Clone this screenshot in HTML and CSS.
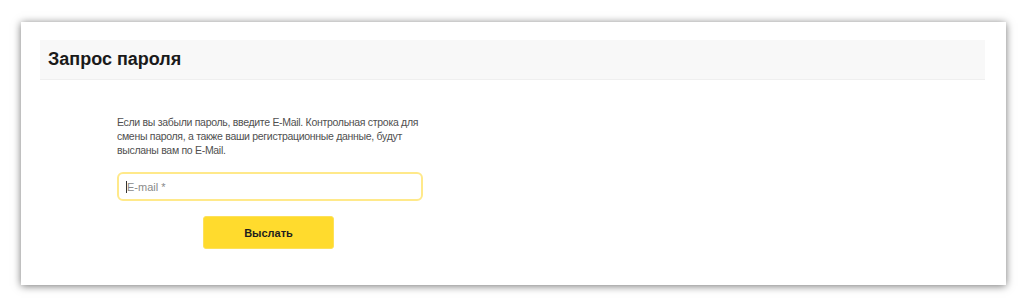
FILE: index.html
```html
<!DOCTYPE html>
<html lang="ru">
<head>
<meta charset="utf-8">
<title>Запрос пароля</title>
<link rel="stylesheet" href="styles.css">
</head>
<body>
<div class="page">
  <div class="card">
    <div class="card-head">
      <h1 class="title">Запрос пароля</h1>
    </div>
    <div class="card-body">
      <form class="form">
        <p class="note">Если вы забыли пароль, введите E-Mail. Контрольная строка для<br>смены пароля, а также ваши регистрационные данные, будут<br>высланы вам по E-Mail.</p>
        <div class="field">
          <span class="caret"></span>
          <input class="input" type="text" placeholder="E-mail *">
        </div>
        <div class="actions">
          <button class="btn" type="button">Выслать</button>
        </div>
      </form>
    </div>
  </div>
</div>
</body>
</html>
```
FILE: styles.css
```css
html, body {
  margin: 0;
  padding: 0;
  background: #ffffff;
}
body {
  font-family: "Liberation Sans", Arial, sans-serif;
}
.page {
  padding: 22px 18px 23px 21px;
}
.card {
  background: #ffffff;
  box-shadow: 0 1px 8px rgba(0, 0, 0, 0.55);
  padding: 18px 21px 36px 19px;
  height: 263px;
  box-sizing: border-box;
}
.card-head {
  background: #f8f8f8;
  border-bottom: 1px solid #efefef;
  height: 40px;
  box-sizing: border-box;
  display: flex;
  align-items: center;
  padding-left: 8px;
}
.title {
  margin: 0;
  font-size: 18px;
  font-weight: bold;
  color: #1a1a1a;
}
.card-body {
  padding: 35px 0 0 77px;
}
.form {
  width: 306px;
  display: flex;
  flex-direction: column;
}
.note {
  margin: 0;
  font-family: "Liberation Sans", Arial, sans-serif;
  font-size: 10.5px;
  line-height: 14px;
  letter-spacing: -0.3px;
  color: #505050;
  white-space: nowrap;
}
.field {
  position: relative;
  margin-top: 15px;
}
.input {
  display: block;
  width: 100%;
  height: 29px;
  box-sizing: border-box;
  border: 2px solid #ffe98a;
  border-radius: 6px;
  padding: 0 8px;
  font-family: "Liberation Sans", Arial, sans-serif;
  font-size: 11px;
  color: #333;
  outline: none;
  background: #fff;
}
.input::placeholder {
  color: #8a8a8a;
}
.caret {
  position: absolute;
  left: 9px;
  top: 9px;
  width: 1px;
  height: 12px;
  background: #333;
}
.actions {
  display: flex;
  justify-content: center;
  margin-top: 15px;
}
.btn {
  width: 131px;
  height: 33px;
  border: 1px solid #fde15a;
  border-radius: 3px;
  background: #ffdb2d;
  font-family: "Liberation Sans", Arial, sans-serif;
  font-size: 11px;
  font-weight: bold;
  color: #1e1e1e;
  cursor: pointer;
  margin-right: 3px;
}
```
